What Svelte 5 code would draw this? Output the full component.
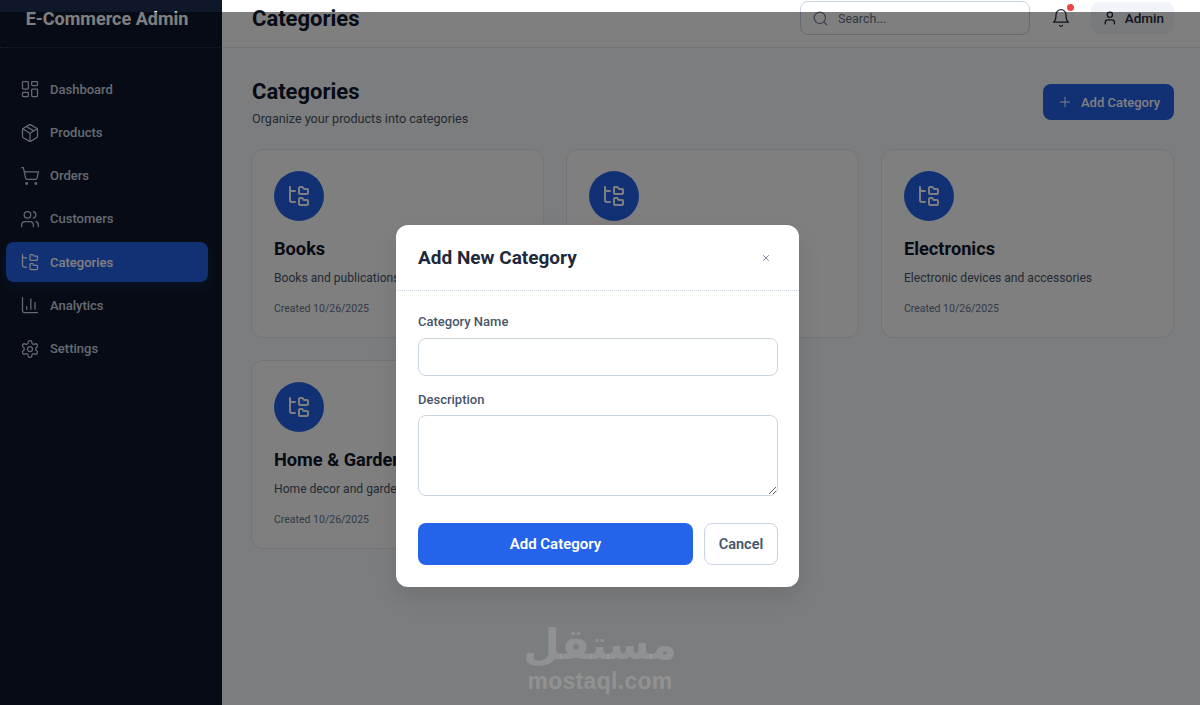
<script>
  const icons = {
    dashboard: '<rect width="7" height="9" x="3" y="3" rx="1"/><rect width="7" height="5" x="14" y="3" rx="1"/><rect width="7" height="9" x="14" y="12" rx="1"/><rect width="7" height="5" x="3" y="16" rx="1"/>',
    products: '<path d="M11 21.73a2 2 0 0 0 2 0l7-4A2 2 0 0 0 21 16V8a2 2 0 0 0-1-1.73l-7-4a2 2 0 0 0-2 0l-7 4A2 2 0 0 0 3 8v8a2 2 0 0 0 1 1.73z"/><path d="M12 22V12"/><path d="m3.3 7 7.703 4.734a2 2 0 0 0 1.994 0L20.7 7"/><path d="m7.5 4.27 9 5.15"/>',
    orders: '<circle cx="8" cy="21" r="1"/><circle cx="19" cy="21" r="1"/><path d="M2.05 2.05h2l2.66 12.42a2 2 0 0 0 2 1.58h9.78a2 2 0 0 0 1.95-1.57l1.65-7.43H5.12"/>',
    customers: '<path d="M16 21v-2a4 4 0 0 0-4-4H6a4 4 0 0 0-4 4v2"/><circle cx="9" cy="7" r="4"/><path d="M22 21v-2a4 4 0 0 0-3-3.87"/><path d="M16 3.13a4 4 0 0 1 0 7.75"/>',
    tree: '<path d="M20 10a1 1 0 0 0 1-1V6a1 1 0 0 0-1-1h-2.5a1 1 0 0 1-.8-.4l-.9-1.2A1 1 0 0 0 15 3h-2a1 1 0 0 0-1 1v5a1 1 0 0 0 1 1Z"/><path d="M20 21a1 1 0 0 0 1-1v-3a1 1 0 0 0-1-1h-2.9a1 1 0 0 1-.88-.55l-.42-.85a1 1 0 0 0-.92-.6H13a1 1 0 0 0-1 1v5a1 1 0 0 0 1 1Z"/><path d="M3 5a2 2 0 0 0 2 2h3"/><path d="M3 3v13a2 2 0 0 0 2 2h3"/>',
    analytics: '<path d="M3 3v16a2 2 0 0 0 2 2h16"/><path d="M18 17V9"/><path d="M13 17V5"/><path d="M8 17v-3"/>',
    settings: '<path d="M12.22 2h-.44a2 2 0 0 0-2 2v.18a2 2 0 0 1-1 1.73l-.43.25a2 2 0 0 1-2 0l-.15-.08a2 2 0 0 0-2.73.73l-.22.38a2 2 0 0 0 .73 2.73l.15.1a2 2 0 0 1 1 1.72v.51a2 2 0 0 1-1 1.74l-.15.09a2 2 0 0 0-.73 2.73l.22.38a2 2 0 0 0 2.73.73l.15-.08a2 2 0 0 1 2 0l.43.25a2 2 0 0 1 1 1.73V20a2 2 0 0 0 2 2h.44a2 2 0 0 0 2-2v-.18a2 2 0 0 1 1-1.73l.43-.25a2 2 0 0 1 2 0l.15.08a2 2 0 0 0 2.73-.73l.22-.39a2 2 0 0 0-.73-2.73l-.15-.08a2 2 0 0 1-1-1.74v-.5a2 2 0 0 1 1-1.74l.15-.09a2 2 0 0 0 .73-2.73l-.22-.38a2 2 0 0 0-2.73-.73l-.15.08a2 2 0 0 1-2 0l-.43-.25a2 2 0 0 1-1-1.73V4a2 2 0 0 0-2-2z"/><circle cx="12" cy="12" r="3"/>',
    search: '<path d="m21 21-4.34-4.34"/><circle cx="11" cy="11" r="8"/>',
    bell: '<path d="M6 8a6 6 0 0 1 12 0c0 7 3 9 3 9H3s3-2 3-9"/><path d="M10.3 21a1.94 1.94 0 0 0 3.4 0"/>',
    user: '<path d="M19 21v-2a4 4 0 0 0-4-4H9a4 4 0 0 0-4 4v2"/><circle cx="12" cy="7" r="4"/>',
    plus: '<path d="M5 12h14"/><path d="M12 5v14"/>',
    close: '<path d="M18 6 6 18"/><path d="m6 6 12 12"/>'
  };

  const nav = [
    { label: "Dashboard", icon: "dashboard" },
    { label: "Products", icon: "products" },
    { label: "Orders", icon: "orders" },
    { label: "Customers", icon: "customers" },
    { label: "Categories", icon: "tree", active: true },
    { label: "Analytics", icon: "analytics" },
    { label: "Settings", icon: "settings" }
  ];

  const categories = [
    { name: "Books", desc: "Books and publications" },
    { name: "Clothing", desc: "Apparel and fashion items" },
    { name: "Electronics", desc: "Electronic devices and accessories" },
    { name: "Home & Garden", desc: "Home decor and garden supplies" }
  ];
</script>

{#snippet icon(name, size, weight = 1.5)}
  <svg
    width={size}
    height={size}
    viewBox="0 0 24 24"
    fill="none"
    stroke="currentColor"
    stroke-width={weight}
    stroke-linecap="round"
    stroke-linejoin="round"
  >
    {@html icons[name]}
  </svg>
{/snippet}

<div class="layout">
  <aside class="sidebar">
    <div class="brand">E-Commerce Admin</div>
    <nav class="nav">
      {#each nav as item}
        <div class="nav-item" class:active={item.active}>
          {@render icon(item.icon, 20)}
          <span>{item.label}</span>
        </div>
      {/each}
    </nav>
  </aside>

  <main class="main">
    <header class="topbar">
      <h1>Categories</h1>
      <div class="topbar-right">
        <div class="search">
          {@render icon("search", 17)}
          <span>Search...</span>
        </div>
        <div class="bell">
          {@render icon("bell", 20)}
          <span class="dot"></span>
        </div>
        <div class="user">
          {@render icon("user", 16, 2)}
          <span>Admin</span>
        </div>
      </div>
    </header>

    <section class="content">
      <div class="page-head">
        <div>
          <h2>Categories</h2>
          <p>Organize your products into categories</p>
        </div>
        <button class="add-btn">
          {@render icon("plus", 16)}
          <span>Add Category</span>
        </button>
      </div>

      <div class="grid">
        {#each categories as cat}
          <article class="card">
            <div class="badge">{@render icon("tree", 24, 2)}</div>
            <h3>{cat.name}</h3>
            <p class="desc">{cat.desc}</p>
            <p class="created">Created 10/26/2025</p>
          </article>
        {/each}
      </div>
    </section>
  </main>

  <div class="watermark">
    <span class="wm-ar" lang="ar">مستقل</span>
    <span class="wm-en">mostaql.com</span>
  </div>

  <div class="overlay">
    <div class="modal">
      <div class="modal-head">
        <h2>Add New Category</h2>
        <span class="close">{@render icon("close", 10, 2)}</span>
      </div>
      <form class="modal-body">
        <label for="cat-name">Category Name</label>
        <input id="cat-name" type="text" />
        <label for="cat-desc" class="second">Description</label>
        <textarea id="cat-desc"></textarea>
        <div class="actions">
          <button type="button" class="primary">Add Category</button>
          <button type="button" class="cancel">Cancel</button>
        </div>
      </form>
    </div>
  </div>
</div>

<style>
  :global(body) {
    margin: 0;
    overflow: hidden;
    font-family: Roboto, "Noto Sans", sans-serif;
  }

  .layout {
    position: relative;
    display: flex;
    width: 1200px;
    height: 705px;
    overflow: hidden;
    background: #f8fafc;
  }

  .sidebar {
    flex: 0 0 222px;
    background: #0f172a;
    color: #cbd5e1;
  }

  .brand {
    height: 48px;
    box-sizing: border-box;
    padding: 5px 8px 0 0;
    border-bottom: 1px dotted #334155;
    text-align: center;
    font-size: 18px;
    line-height: 27px;
    font-weight: 700;
    color: #fff;
  }

  .nav {
    display: flex;
    flex-direction: column;
    gap: 3.2px;
    padding: 21.4px 14px 0 6px;
  }

  .nav-item {
    display: flex;
    align-items: center;
    gap: 10px;
    height: 40px;
    padding: 0 14px;
    border-radius: 8px;
    font-size: 13px;
    font-weight: 500;
  }

  .nav-item.active {
    background: #2563eb;
    color: #fff;
    box-shadow: 0 4px 12px rgba(37, 99, 235, 0.2);
  }

  .main {
    flex: 1;
    min-width: 0;
  }

  .topbar {
    display: flex;
    justify-content: space-between;
    align-items: flex-start;
    height: 48px;
    box-sizing: border-box;
    padding: 1px 26px 0 30px;
    background: #fff;
    border-bottom: 1px solid #e2e8f0;
  }

  .topbar h1 {
    margin: 0;
    font-size: 22px;
    line-height: 36px;
    font-weight: 700;
    color: #0f172a;
  }

  .topbar-right {
    display: flex;
    align-items: center;
  }

  .search {
    display: flex;
    align-items: center;
    gap: 9px;
    width: 230px;
    height: 34px;
    box-sizing: border-box;
    padding: 0 11px;
    border: 1px solid #cbd5e1;
    border-radius: 8px;
    color: #64748b;
    font-size: 12.5px;
  }

  .bell {
    position: relative;
    display: flex;
    margin-left: 21px;
    color: #1e293b;
  }

  .dot {
    position: absolute;
    top: -4px;
    right: -3px;
    width: 7px;
    height: 7px;
    border-radius: 50%;
    background: #ef4444;
  }

  .user {
    display: flex;
    align-items: center;
    gap: 7px;
    width: 83px;
    height: 32px;
    box-sizing: border-box;
    margin-left: 20px;
    padding: 0 10px 0 11px;
    border-radius: 8px;
    background: #f1f5f9;
    color: #1e293b;
    font-size: 13.5px;
    font-weight: 500;
  }

  .content {
    padding: 30px 26px 0 29px;
  }

  .page-head {
    display: flex;
    justify-content: space-between;
    align-items: flex-start;
    margin-bottom: 21px;
  }

  .page-head h2 {
    margin: 0 0 0 1px;
    font-size: 22px;
    line-height: 28px;
    font-weight: 700;
    color: #0f172a;
  }

  .page-head p {
    margin: 4px 0 0 1px;
    font-size: 12.6px;
    line-height: 18px;
    color: #475569;
  }

  .add-btn {
    display: flex;
    align-items: center;
    justify-content: center;
    gap: 8px;
    width: 131px;
    height: 36px;
    margin-top: 6px;
    padding: 0;
    border: 0;
    border-radius: 8px;
    background: #2563eb;
    color: #fff;
    font: 500 13px Roboto, sans-serif;
  }

  .grid {
    display: grid;
    grid-template-columns: repeat(3, 293px);
    grid-auto-rows: 189px;
    gap: 22px;
  }

  .card {
    box-sizing: border-box;
    padding: 21px 22px;
    border: 1px solid #e2e8f0;
    border-radius: 12px;
    background: #fff;
  }

  .badge {
    display: flex;
    align-items: center;
    justify-content: center;
    width: 50px;
    height: 50px;
    border-radius: 50%;
    background: #2563eb;
    color: #fff;
  }

  .card h3 {
    margin: 15px 0 0;
    font-size: 18.2px;
    line-height: 26px;
    font-weight: 700;
    color: #0f172a;
  }

  .desc {
    margin: 8px 0 0;
    font-size: 12.1px;
    line-height: 17px;
    color: #475569;
  }

  .created {
    margin: 14px 0 0;
    font-size: 10.5px;
    line-height: 16px;
    color: #64748b;
  }

  .watermark {
    position: absolute;
    left: 500px;
    top: 619px;
    width: 200px;
    display: flex;
    flex-direction: column;
    align-items: center;
    color: rgba(255, 255, 255, 0.18);
    z-index: 2;
  }

  .wm-ar {
    font: 700 42px/51px "DejaVu Sans", sans-serif;
  }

  .wm-en {
    font: 700 23px/22px "Liberation Sans", sans-serif;
    letter-spacing: 0.3px;
  }

  .overlay {
    position: absolute;
    top: 12px;
    left: 0;
    right: 0;
    bottom: 0;
    box-sizing: border-box;
    padding: 213px 0 0 396px;
    background: rgba(0, 0, 0, 0.5);
  }

  .modal {
    width: 403px;
    height: 362px;
    box-sizing: border-box;
    border-radius: 12px;
    background: #fff;
    box-shadow: 0 10px 25px rgba(0, 0, 0, 0.1);
  }

  .modal-head {
    display: flex;
    justify-content: space-between;
    align-items: center;
    height: 66px;
    box-sizing: border-box;
    padding: 0 28px 0 22px;
    border-bottom: 1px dotted #cbd5e1;
  }

  .modal-head h2 {
    margin: 0;
    font-size: 19px;
    font-weight: 700;
    color: #1e293b;
  }

  .close {
    display: flex;
    color: #64748b;
  }

  .modal-body {
    display: flex;
    flex-direction: column;
    padding: 22px 21px 0 22px;
  }

  label {
    font-size: 13px;
    line-height: 18px;
    font-weight: 500;
    color: #475569;
  }

  label.second {
    margin-top: 15px;
  }

  input,
  textarea {
    display: block;
    width: 100%;
    box-sizing: border-box;
    margin-top: 7px;
    border: 1px solid #cbd5e1;
    border-radius: 8px;
    background: #fff;
    outline: none;
  }

  input {
    height: 38px;
  }

  textarea {
    height: 81px;
    margin-top: 6px;
  }

  .actions {
    display: flex;
    gap: 11px;
    margin-top: 27px;
  }

  .actions button {
    height: 42px;
    border-radius: 8px;
    font: 600 15px Roboto, sans-serif;
  }

  .primary {
    flex: 1;
    border: 0;
    background: #2563eb;
    color: #fff;
  }

  .cancel {
    width: 74px;
    border: 1px solid #cbd5e1;
    background: #fff;
    color: #475569;
  }

  .actions .cancel {
    font-size: 14.5px;
  }
</style>
